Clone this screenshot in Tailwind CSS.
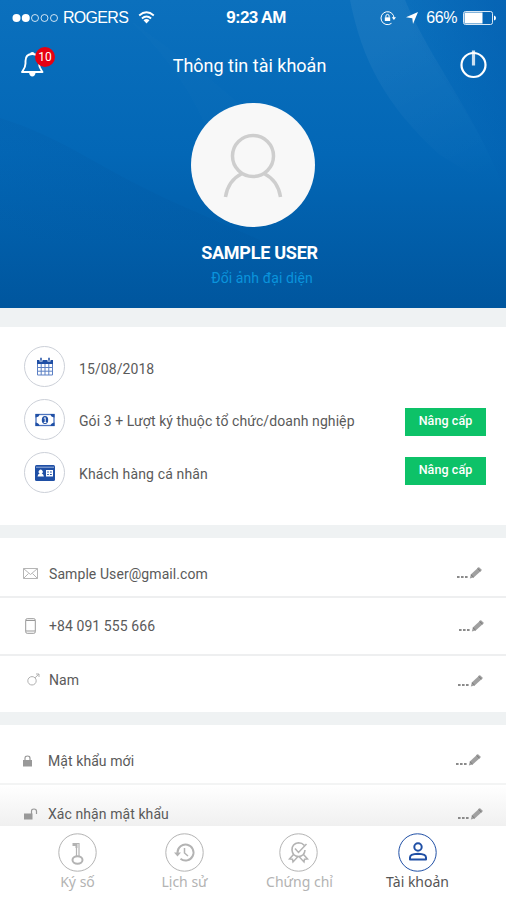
<!DOCTYPE html>
<html lang="vi">
<head>
  <meta charset="UTF-8" />
  <meta name="viewport" content="width=device-width, initial-scale=1.0"/>
  <title>Thông tin tài khoản</title>
  <script src="https://cdn.jsdelivr.net/npm/@tailwindcss/browser@4"></script>
</head>
<body class="h-[900px] w-[506px] overflow-hidden bg-white font-['Roboto',sans-serif] text-sm text-[#5a5a5a] whitespace-nowrap flex flex-col">

  <!-- Shared icons -->
  <svg class="hidden" xmlns="http://www.w3.org/2000/svg">
    <symbol id="edit" viewBox="0 0 28 14">
      <path d="M1 11h2.600M5 11h2.600M9 11h2.600" stroke="#8a8a8a" stroke-width="1.800"/>
      <path d="M13.800 12.500l1-4L22.800 1l3.200 3-8.300 7.500z" fill="#a0a0a0"/>
      <path d="M21.500 2.300l3 2.900M15 8.800l2.600 2.400" stroke="#777"/>
    </symbol>
  </svg>

  <!-- Header -->
  <header class="relative h-[308px] shrink-0 bg-linear-to-b from-[#0b70bd] via-[#0367b6] to-[#00569e] text-white">
    <svg class="absolute inset-0" width="506" height="308" viewBox="0 0 506 308" fill="none">
      <defs>
        <linearGradient id="ray" x1="385" y1="40" x2="460" y2="190" gradientUnits="userSpaceOnUse">
          <stop stop-color="#fff" stop-opacity=".05"/>
          <stop offset="1" stop-color="#fff" stop-opacity="0"/>
        </linearGradient>
        <linearGradient id="ground" x1="80" y1="130" x2="20" y2="240" gradientUnits="userSpaceOnUse">
          <stop stop-color="#00458a" stop-opacity=".1"/>
          <stop offset="1" stop-color="#00458a" stop-opacity="0"/>
        </linearGradient>
        <linearGradient id="corner" x1="425" y1="60" x2="506" y2="20" gradientUnits="userSpaceOnUse">
          <stop stop-color="#0054a8" stop-opacity="0"/>
          <stop offset="1" stop-color="#0054a8" stop-opacity=".4"/>
        </linearGradient>
      </defs>
      <path d="M350 0C362 60 385 105 440 155L506 195C480 120 430 60 405 0z" fill="url(#ray)"/>
      <path d="M380 0C430 60 480 120 506 195V0z" fill="url(#corner)"/>
      <path d="M130 20C170 50 210 75 245 110L205 125C185 80 160 50 130 20z" fill="#fff" fill-opacity=".012"/>
      <path d="M0 118C70 140 100 170 180 205L260 240H0z" fill="url(#ground)"/>
    </svg>

    <div class="relative flex h-full flex-col">
      <!-- Status bar -->
      <div class="grid h-[35px] grid-cols-[1fr_auto_1fr] items-center pr-2.5 pl-3 font-['Liberation_Sans',sans-serif] text-base">
        <div class="flex items-center">
          <svg width="47" height="10" viewBox="0 0 47 10" fill="none" stroke="#fff">
            <circle cx="4.500" cy="5" r="4" fill="#fff" stroke="none"/>
            <circle cx="13.800" cy="5" r="4" fill="#fff" stroke="none"/>
            <circle cx="23" cy="5" r="3.500" stroke-width=".8"/>
            <circle cx="32.500" cy="5" r="3.500" stroke-width=".8"/>
            <circle cx="42" cy="5" r="3.500" stroke-width=".8"/>
          </svg>
          <span class="ml-1 tracking-[-0.7px]">ROGERS</span>
          <svg class="ml-2.5" width="17" height="13" viewBox="0 0 17 13" fill="none" stroke="#fff" stroke-width="1.900">
            <path d="M1.200 4.500Q8.500-1.800 15.800 4.500M3.900 7.500Q8.500 3.500 13.100 7.500"/>
            <path d="M5.500 9.300Q8.500 6.800 11.500 9.300L8.500 12.500z" fill="#fff" stroke="none"/>
          </svg>
        </div>
        <span class="pl-1 text-[17px] font-bold tracking-[-0.7px]">9:23 AM</span>
        <div class="flex items-center justify-end">
          <svg width="16" height="16" viewBox="0 0 16 16" fill="none" stroke="#fff">
            <path d="M14 8.500A6.500 6.500 0 1 0 11.500 13.300"/>
            <path d="M11.800 7.200h4.200l-2.100 2.800z" fill="#fff" stroke="none"/>
            <path d="M4.800 7.300h5.400v3.700H4.800z" fill="#fff" stroke="none"/>
            <path d="M5.900 7.500V6a1.600 1.600 0 0 1 3.200 0v1.500"/>
          </svg>
          <svg class="ml-2.5" width="12" height="12" viewBox="0 0 12 12" fill="#fff"><path d="M12 0L7 12 6.300 6.200 0 5.300z"/></svg>
          <span class="ml-2 tracking-[-0.4px]">66%</span>
          <svg class="ml-1.5" width="33" height="14" viewBox="0 0 33 14" fill="none">
            <rect x=".500" y=".500" width="29" height="13" rx="2" stroke="#fff" stroke-opacity=".85"/>
            <rect x="1.500" y="1.500" width="18" height="11" fill="#fff"/>
            <path d="M31 4.500q2 .5 2 2.500t-2 2.500z" fill="#fff"/>
          </svg>
        </div>
      </div>

      <!-- Title row -->
      <div class="flex h-[57px] items-center justify-between pr-[19px] pl-[21px]">
        <div class="relative">
          <svg width="24" height="28" viewBox="0 0 24 28" fill="none" stroke="#fff" stroke-width="1.900">
            <path d="M1 22C3 19 4.500 17.500 4.500 13.500V11C4.500 6.500 7 4 11.300 4S18 6.500 18 11v2.500C18 17.500 19.500 19 21.500 22z" stroke-linejoin="round"/>
            <path d="M9 4.200Q9 2 11.300 2T13.600 4.200z" fill="#fff" stroke="none"/>
            <path d="M8 22.500h6.600Q14 26.500 11.300 26.500T8 22.500z" fill="#fff" stroke="none"/>
          </svg>
          <span class="absolute -top-[3px] left-3.5 flex size-5 items-center justify-center rounded-full bg-[#e60012] text-xs">10</span>
        </div>
        <h1 class="mr-1.5 pt-1 text-[18px]">Thông tin tài khoản</h1>
        <svg width="27" height="30" viewBox="0 0 27 30" fill="none" stroke="#fff">
          <circle cx="13.500" cy="16" r="12" stroke-width="2.200"/>
          <path d="M13.500 1.500v15" stroke-width="3.200" stroke-opacity=".8"/>
        </svg>
      </div>

      <!-- Avatar -->
      <div class="mt-[11px] flex flex-col items-center">
        <div class="flex size-[124px] items-center justify-center rounded-full bg-[#f8f8f8]">
          <svg width="60" height="66" viewBox="0 0 60 66" fill="none" stroke="#cecece" stroke-width="3.500">
            <circle cx="30" cy="24" r="20.500"/>
            <path d="M2.500 65Q5 48.500 19 41.500M57.500 65Q55 48.500 41 41.500"/>
          </svg>
        </div>
        <p class="mt-[13px] ml-[13px] text-[18px] leading-[26px] font-bold tracking-[-0.25px]">SAMPLE USER</p>
        <a href="#" class="mt-0.5 ml-[18px] text-[14px] leading-5 tracking-[0.1px] text-[#0a94dc]">Đổi ảnh đại diện</a>
      </div>
    </div>
  </header>

  <main class="flex h-[518px] shrink-0 flex-col overflow-hidden bg-[#eff2f3] tracking-[0.08px]">
    <!-- Package -->
    <section class="mt-[19px] flex h-[198px] shrink-0 justify-between bg-white pt-[19px] pr-5 pl-6">
      <ul class="flex flex-col gap-3">
        <li class="flex h-[41px] items-center gap-3.5">
          <span class="flex size-[41px] items-center justify-center rounded-full border border-[#ccd0d8]">
            <svg width="18" height="19" viewBox="0 0 18 19" fill="none">
              <path d="M1 3h16v4H1z" fill="#1f4fa5"/>
              <path d="M1.500 7v11h15V7M1.500 10.500h15M1.500 14.200h15M5.200 7v11M9 7v11M12.800 7v11" stroke="#5c80c4"/>
              <path d="M5 1v3.500M13 1v3.500" stroke="#fff" stroke-width="3"/>
              <path d="M5 .8v3M13 .8v3" stroke="#1f4fa5" stroke-width="1.500"/>
            </svg>
          </span>
          <span class="pt-1">15/08/2018</span>
        </li>
        <li class="flex h-[41px] items-center gap-3.5">
          <span class="flex size-[41px] items-center justify-center rounded-full border border-[#ccd0d8]">
            <svg width="20" height="14" viewBox="0 0 20 14" fill="none">
              <rect x="1" y="1.500" width="18" height="11" stroke="#4c74bf" stroke-width="1.300"/>
              <path d="M.5 1h4q0 3-4 3.500zM19.500 1h-4q0 3 4 3.500zM.5 13h4q0-3-4-3.500zM19.500 13h-4q0-3 4-3.500z" fill="#1f4fa5"/>
              <ellipse cx="10" cy="7" rx="3.200" ry="4" fill="#1f4fa5"/>
              <path d="M8.800 5.500l1.400-.9v5M8.800 9.500h2.600" stroke="#fff"/>
            </svg>
          </span>
          <span class="pt-0.5">Gói 3 + Lượt ký thuộc tổ chức/doanh nghiệp</span>
        </li>
        <li class="flex h-[41px] items-center gap-3.5">
          <span class="flex size-[41px] items-center justify-center rounded-full border border-[#ccd0d8]">
            <svg width="20" height="16" viewBox="0 0 20 16">
              <rect width="20" height="16" rx="1.500" fill="#1f4fa5"/>
              <path d="M1 2.200h18" stroke="#9db4dd"/>
              <path d="M2.500 11.500q.3-2.500 2.200-3a2 2 0 1 1 2 0q1.900.5 2.200 3z" fill="#fff"/>
              <path d="M11 5h7v6.500h-7z" fill="#fff"/>
              <path d="M12.200 7h1.600M15 7h1.800M12.200 9.500h1.600M15 9.500h1.800" stroke="#1f4fa5"/>
            </svg>
          </span>
          <span class="pt-0.5 tracking-[0.15px]">Khách hàng cá nhân</span>
        </li>
      </ul>
      <div class="mt-[62px] flex flex-col gap-[21px] text-[12.5px] font-medium text-white">
        <button class="h-7 w-[81px] bg-[#0dc268] pb-0.5">Nâng cấp</button>
        <button class="h-7 w-[81px] bg-[#0dc268] pb-0.5">Nâng cấp</button>
      </div>
    </section>

    <!-- Contact -->
    <section class="mt-[13px] flex h-[174px] shrink-0 flex-col bg-white">
      <div class="flex h-[60px] items-center border-b-2 border-[#eeeff0] pt-[13px] pr-[22px] pl-[23px]">
        <svg width="16" height="12" viewBox="0 0 16 12" fill="none" stroke="#b5b5b5"><path d="M.5.5h14v10H.5zM.5.5l7 6 7-6M.5 10.500l5-5M14.500 10.500l-5-5"/></svg>
        <span class="ml-2.5 flex-1">Sample User@gmail.com</span>
        <svg class="-mt-0.5" width="28" height="14"><use href="#edit"/></svg>
      </div>
      <div class="flex h-[58px] items-center border-b-2 border-[#eeeff0] pr-5 pl-[25px]">
        <svg width="11" height="16" viewBox="0 0 11 16" fill="none" stroke="#999"><rect x=".700" y=".700" width="9.600" height="14.600" rx="1.500"/><path d="M1 2.500h9M1 13h9"/></svg>
        <span class="ml-[13px] flex-1">+84 091 555 666</span>
        <svg width="28" height="14"><use href="#edit"/></svg>
      </div>
      <div class="flex h-[47px] items-center pr-[21px] pl-[27px]">
        <svg width="13" height="13" viewBox="0 0 13 13" fill="none" stroke="#b0b0b0"><circle cx="5" cy="7.800" r="4.200"/><path d="M8 4.800L12 1M9 1h3v3"/></svg>
        <span class="ml-[9px] flex-1">Nam</span>
        <svg class="mt-0.5" width="28" height="14"><use href="#edit"/></svg>
      </div>
    </section>

    <!-- Password -->
    <section class="mt-[13px] flex h-[101px] shrink-0 flex-col bg-white">
      <div class="flex h-[60px] items-center border-b-2 border-[#f3f4f4] pt-[13px] pr-[23px] pl-[23px]">
        <svg width="9" height="12" viewBox="0 0 9 12" fill="none"><path d="M0 5h9v6.500H0z" fill="#999"/><path d="M2 5.500V3.200Q2 1 4.500 1T7 3.200v2.300" stroke="#999" stroke-width="1.200"/></svg>
        <span class="ml-4 flex-1">Mật khẩu mới</span>
        <svg class="-mt-0.5" width="28" height="14"><use href="#edit"/></svg>
      </div>
      <div class="flex h-[41px] items-center bg-linear-to-b from-white to-[#f0f0f0] pt-[17px] pr-[21px] pl-6">
        <svg width="14" height="12" viewBox="0 0 14 12" fill="none"><path d="M0 5.500h8.500v6H0z" fill="#999"/><path d="M7.500 6V3.200Q7.500 1 10 1t2.500 2.200V6" stroke="#999" stroke-width="1.200"/></svg>
        <span class="ml-2.5 flex-1">Xác nhận mật khẩu</span>
        <svg width="28" height="14"><use href="#edit"/></svg>
      </div>
    </section>
  </main>

  <!-- Tab bar -->
  <nav class="grid h-[74px] shrink-0 grid-cols-[107px_107px_120px_119px] bg-white pt-[7px] pl-6 font-['Noto_Sans',sans-serif] text-sm text-[#b3b3b3]">
    <a href="#" class="flex flex-col items-center">
      <svg width="39" height="39" viewBox="0 0 39 39" fill="none" stroke="#b3b3b3">
        <circle cx="19.500" cy="19.500" r="18.700"/>
        <ellipse cx="19.500" cy="27" rx="5" ry="3.700" stroke-width="2"/>
        <path d="M18.500 23V10.500h2.500V23" stroke-width="1.200"/>
        <path d="M14.500 10h5v5h-2v-2h-3z" fill="#b3b3b3" stroke="none"/>
      </svg>
      <span class="leading-5">Ký số</span>
    </a>
    <a href="#" class="flex flex-col items-center">
      <svg width="39" height="39" viewBox="0 0 39 39" fill="none" stroke="#b3b3b3">
        <circle cx="19.500" cy="19.500" r="18.700"/>
        <path d="M12.500 21V19.500a8 8 0 1 1 3 6.300" stroke-width="2"/>
        <path d="M9 19.500h7l-3.500 4z" fill="#b3b3b3" stroke="none"/>
        <path d="M19.500 15v5l3.500 3" stroke-width="1.500"/>
      </svg>
      <span class="leading-5">Lịch sử</span>
    </a>
    <a href="#" class="flex flex-col items-center">
      <svg width="39" height="39" viewBox="0 0 39 39" fill="none" stroke="#b3b3b3">
        <circle cx="19.500" cy="19.500" r="18.700"/>
        <path d="M25.500 12.500Q23 9.800 19.500 9.800 13 10.500 13 17q.5 6.300 6.500 6.500 6-.2 6.500-6.500" stroke-width="1.600"/>
        <path d="M16 15.500l3.500 4 8-8.500M14.500 21.500L10.500 26l3 .3.500 2.700 5-5.500M24.500 21.500l4 4.500-3 .3-.5 2.700-5-5.500" stroke-width="1.500"/>
      </svg>
      <span class="ml-[3px] leading-5">Chứng chỉ</span>
    </a>
    <a href="#" class="flex flex-col items-center text-[#555]">
      <svg width="39" height="39" viewBox="0 0 39 39" fill="none" stroke="#1f4fa5">
        <circle cx="19.500" cy="19.500" r="18.700"/>
        <circle cx="20" cy="14" r="3.700" stroke-width="2"/>
        <path d="M12 26.500v-2q0-3.500 8-3.700 8 .2 8 3.700v2z" stroke-width="2" stroke-linejoin="round"/>
      </svg>
      <span class="leading-5">Tài khoản</span>
    </a>
  </nav>
</body>
</html>
